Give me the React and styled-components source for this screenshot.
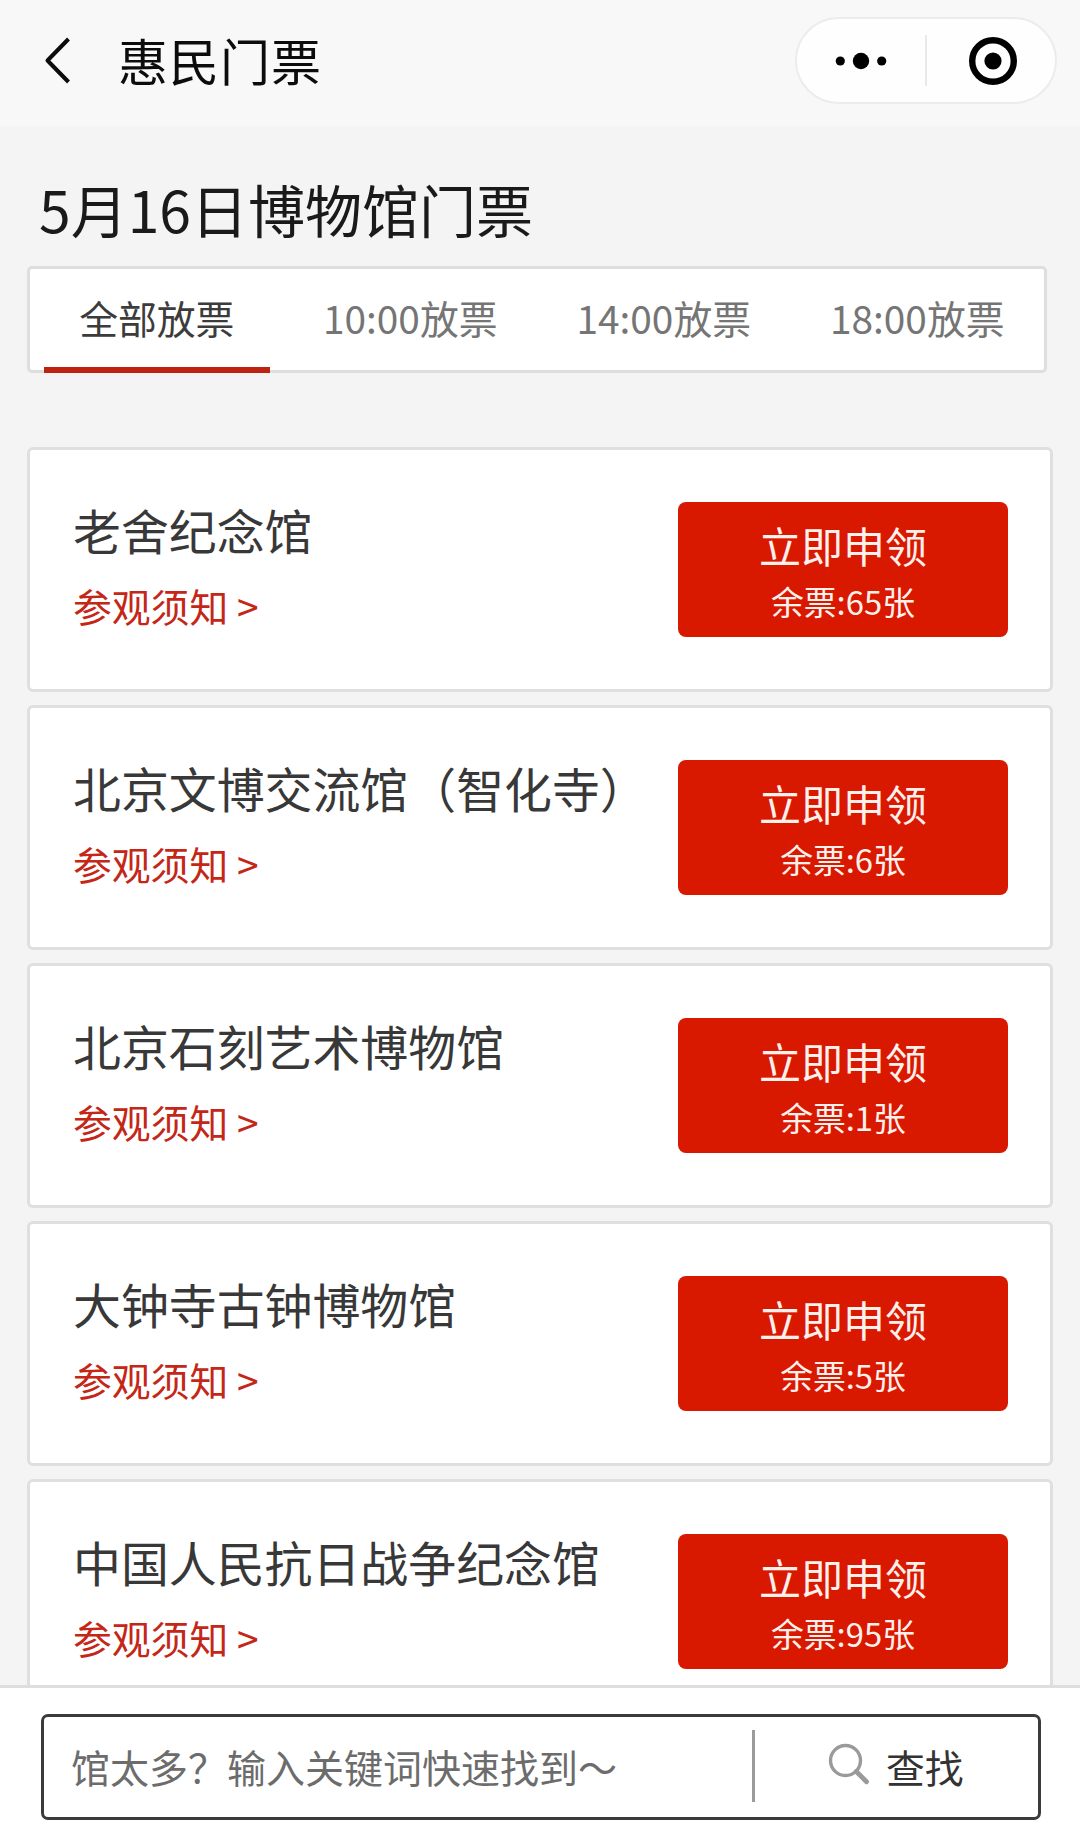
import React from "react";
import styled, { createGlobalStyle } from "styled-components";

const GlobalStyle = createGlobalStyle`
  *, *::before, *::after { box-sizing: border-box; }
  body {
    margin: 0;
    background: #f4f4f4;
    font-family: "Noto Sans CJK SC", "Noto Sans", sans-serif;
  }
  button, input { font-family: inherit; }
`;

const Screen = styled.div`
  width: 1080px;
  height: 1825px;
  display: flex;
  flex-direction: column;
  overflow: hidden;
  background: #f4f4f4;
`;

const Header = styled.header`
  flex: none;
  height: 126px;
  display: flex;
  align-items: flex-start;
  justify-content: space-between;
  padding: 17px 23px 0 43px;
  background: #f8f8f8;
`;

const HeaderLeft = styled.div`
  height: 87px;
  display: flex;
  align-items: center;
  gap: 45px;
`;

const HeaderTitle = styled.h1`
  margin: 0 0 3px;
  font-size: 50px;
  line-height: 60px;
  font-weight: 400;
  letter-spacing: 1px;
  color: #0c0c0c;
`;

const Capsule = styled.div`
  width: 262px;
  height: 87px;
  display: flex;
  align-items: center;
  border: 2px solid #ececec;
  border-radius: 44px;
  background: #fefefe;
`;

const CapsuleButton = styled.button`
  flex: none;
  width: 128px;
  display: flex;
  align-items: center;
  justify-content: center;
  padding: 0 0 0 ${(p) => p.$inset || 0}px;
  border: 0;
  background: none;
`;

const CapsuleDivider = styled.span`
  width: 2px;
  height: 51px;
  background: #e9e9e9;
`;

const Body = styled.main`
  flex: 1;
  min-height: 0;
  overflow: hidden;
  padding: 44px 27px 0;
`;

const Heading = styled.h2`
  margin: 0 0 20px 12px;
  font-size: 57px;
  line-height: 76px;
  font-weight: 400;
  color: #1a1a1a;
`;

const Tabs = styled.nav`
  width: 1020px;
  height: 107px;
  display: flex;
  border: 3px solid #dedede;
  border-radius: 5px;
  background: #fff;
`;

const Tab = styled.button`
  position: relative;
  flex: 1;
  padding: 0 0 5px;
  border: 0;
  background: none;
  font-size: 38.8px;
  line-height: 50px;
  color: ${(p) => (p.$active ? "#3c3c3c" : "#757575")};

  &::after {
    content: "";
    display: ${(p) => (p.$active ? "block" : "none")};
    position: absolute;
    left: 14px;
    right: 14px;
    bottom: -3px;
    height: 6px;
    background: #be2312;
  }
`;

const List = styled.div`
  margin-top: 74px;
  display: flex;
  flex-direction: column;
  gap: 13px;
`;

const Card = styled.article`
  flex: none;
  height: 245px;
  display: flex;
  align-items: flex-start;
  justify-content: space-between;
  padding: 49px 42px 0 43px;
  border: 3px solid #dfdfdf;
  border-radius: 6px;
  background: #fff;
`;

const Info = styled.div`
  display: flex;
  flex-direction: column;
  align-items: flex-start;
  gap: 21px;
`;

const Name = styled.h3`
  margin: 0;
  font-size: 47.9px;
  line-height: 60px;
  font-weight: 400;
  white-space: nowrap;
  color: #383838;
`;

const Notice = styled.a`
  font-size: 38.8px;
  line-height: 50px;
  white-space: nowrap;
  color: #c42717;
`;

const Apply = styled.button`
  flex: none;
  width: 330px;
  height: 135px;
  margin-top: 3px;
  padding: 2px 0 0;
  display: flex;
  flex-direction: column;
  align-items: center;
  justify-content: center;
  gap: 11px;
  border: 0;
  border-radius: 8px;
  background: #d91800;
  color: #fff0ec;
`;

const ApplyLabel = styled.span`
  font-size: 42px;
  line-height: 50px;
`;

const ApplyCount = styled.span`
  font-size: 32.8px;
  line-height: 40px;
`;

const Footer = styled.footer`
  flex: none;
  height: 140px;
  padding: 26px 39px 0 41px;
  border-top: 3px solid #dedede;
  background: #fff;
`;

const SearchBox = styled.form`
  height: 106px;
  display: flex;
  align-items: center;
  border: 3px solid #3b3b3b;
  border-radius: 7px;
  background: #fff;
`;

const SearchInput = styled.input`
  width: 708px;
  height: 60px;
  margin-bottom: 3px;
  padding: 0 0 0 27px;
  border: 0;
  outline: 0;
  background: none;
  font-size: 39px;
  color: #333;

  &::placeholder {
    color: #6c6c6c;
    opacity: 1;
  }
`;

const SearchDivider = styled.span`
  width: 3px;
  height: 72px;
  margin-bottom: 3px;
  background: #9b9b9b;
`;

const SearchButton = styled.button`
  flex: 1;
  display: flex;
  align-items: center;
  gap: 16px;
  margin-bottom: 3px;
  padding: 0 0 0 73px;
  border: 0;
  background: none;
  font-size: 38.8px;
  line-height: 50px;
  color: #333;
`;

const SearchGlyph = styled.svg`
  margin-top: -3px;
`;

const TABS = ["全部放票", "10:00放票", "14:00放票", "18:00放票"];

const MUSEUMS = [
  { name: "老舍纪念馆", left: 65 },
  { name: "北京文博交流馆（智化寺）", left: 6 },
  { name: "北京石刻艺术博物馆", left: 1 },
  { name: "大钟寺古钟博物馆", left: 5 },
  { name: "中国人民抗日战争纪念馆", left: 95 },
];

function BackIcon() {
  return (
    <svg width="30" height="50" viewBox="0 0 30 50" fill="none">
      <path d="M25.5 3 L4.5 24.5 L25.5 46" stroke="#0c0c0c" strokeWidth="4" strokeLinejoin="round" />
    </svg>
  );
}

function MoreIcon() {
  return (
    <svg width="52" height="18" viewBox="0 0 52 18">
      <circle cx="5.3" cy="9" r="4.6" />
      <circle cx="26" cy="9" r="8.2" />
      <circle cx="46.7" cy="9" r="4.6" />
    </svg>
  );
}

function CloseIcon() {
  return (
    <svg width="50" height="50" viewBox="0 0 50 50">
      <circle cx="25" cy="25" r="20.8" fill="none" stroke="#000" strokeWidth="6.4" />
      <circle cx="25" cy="25" r="8.6" />
    </svg>
  );
}

function SearchIcon() {
  return (
    <SearchGlyph width="42" height="42" viewBox="0 0 42 42" fill="none" stroke="#9a9a9a">
      <circle cx="17.5" cy="17.5" r="15" strokeWidth="3.4" />
      <path d="M28.3 28.5 L38.5 38.7" strokeWidth="4.8" strokeLinecap="round" />
    </SearchGlyph>
  );
}

export default function App() {
  return (
    <>
      <GlobalStyle />
      <Screen>
        <Header>
          <HeaderLeft>
            <BackIcon />
            <HeaderTitle>惠民门票</HeaderTitle>
          </HeaderLeft>
          <Capsule>
            <CapsuleButton>
              <MoreIcon />
            </CapsuleButton>
            <CapsuleDivider />
            <CapsuleButton $inset={4}>
              <CloseIcon />
            </CapsuleButton>
          </Capsule>
        </Header>
        <Body>
          <Heading>5月16日博物馆门票</Heading>
          <Tabs>
            {TABS.map((label, i) => (
              <Tab key={label} $active={i === 0}>
                {label}
              </Tab>
            ))}
          </Tabs>
          <List>
            {MUSEUMS.map((m) => (
              <Card key={m.name}>
                <Info>
                  <Name>{m.name}</Name>
                  <Notice>参观须知 &gt;</Notice>
                </Info>
                <Apply>
                  <ApplyLabel>立即申领</ApplyLabel>
                  <ApplyCount>余票:{m.left}张</ApplyCount>
                </Apply>
              </Card>
            ))}
          </List>
        </Body>
        <Footer>
          <SearchBox>
            <SearchInput placeholder="馆太多？输入关键词快速找到～" />
            <SearchDivider />
            <SearchButton type="button">
              <SearchIcon />
              查找
            </SearchButton>
          </SearchBox>
        </Footer>
      </Screen>
    </>
  );
}
